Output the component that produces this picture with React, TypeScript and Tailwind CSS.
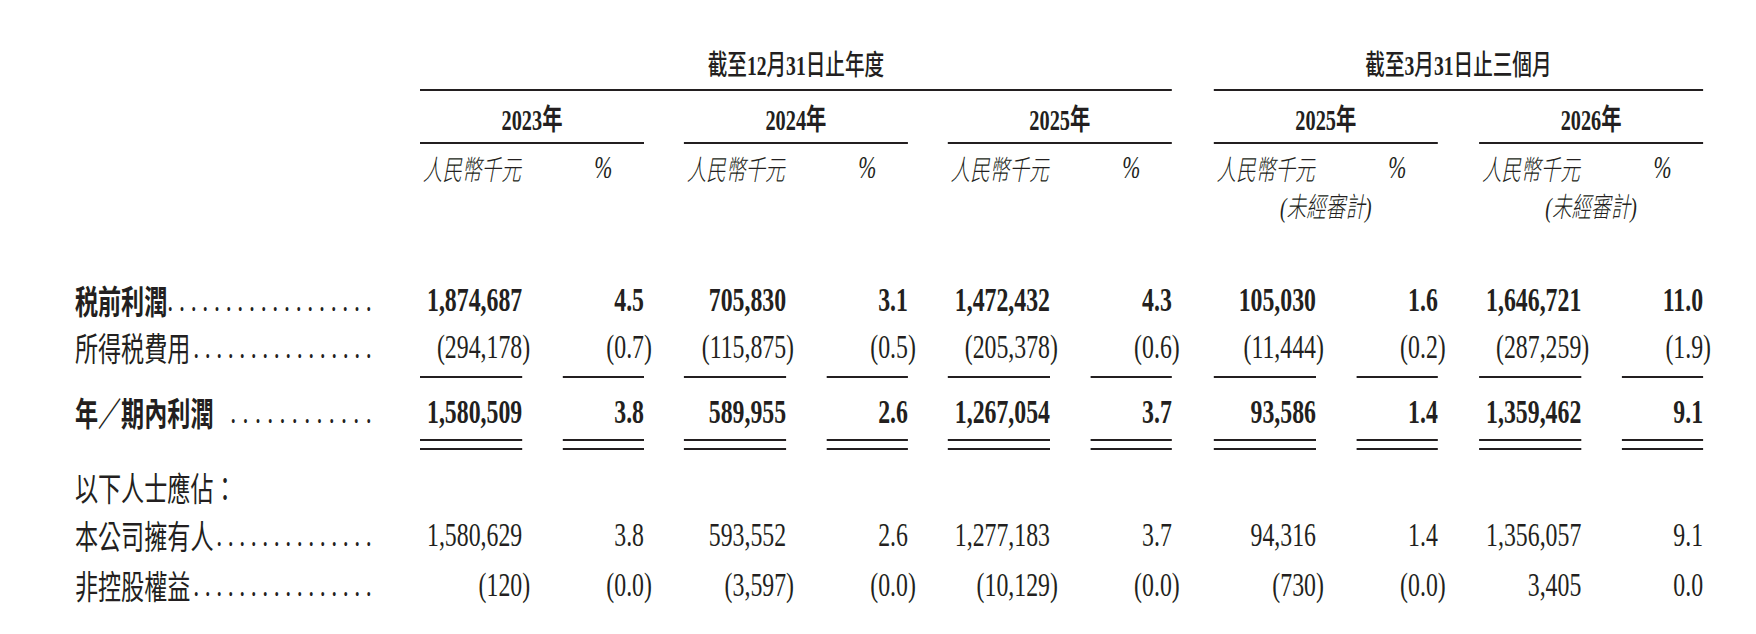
const ink = "text-[#231f20]";
const serif = "font-['Liberation_Serif','Noto_Sans_CJK_TC',serif]";
const sans = "font-['Noto_Sans_CJK_TC','Noto_Sans',sans-serif]";

// left margin of each of the five column groups (unscaled px)
const groupGaps = ["", "ml-[57px]", "ml-[57px]", "ml-[60px]", "ml-[59px]"];

type Pair = [string, string];

const rows: { label: string; bold?: boolean; dots?: number; lead?: string; vals?: Pair[] }[] = [
  {
    label: "税前利潤",
    bold: true,
    dots: 18,
    vals: [
      ["1,874,687", "4.5"],
      ["705,830", "3.1"],
      ["1,472,432", "4.3"],
      ["105,030", "1.6"],
      ["1,646,721", "11.0"],
    ],
  },
  {
    label: "所得税費用",
    dots: 16,
    lead: "pl-[4px]",
    vals: [
      ["(294,178)", "(0.7)"],
      ["(115,875)", "(0.5)"],
      ["(205,378)", "(0.6)"],
      ["(11,444)", "(0.2)"],
      ["(287,259)", "(1.9)"],
    ],
  },
  {
    label: "年／期內利潤",
    bold: true,
    dots: 12,
    lead: "pl-[24px]",
    vals: [
      ["1,580,509", "3.8"],
      ["589,955", "2.6"],
      ["1,267,054", "3.7"],
      ["93,586", "1.4"],
      ["1,359,462", "9.1"],
    ],
  },
  { label: "以下人士應佔：" },
  {
    label: "本公司擁有人",
    dots: 14,
    lead: "pl-[4px]",
    vals: [
      ["1,580,629", "3.8"],
      ["593,552", "2.6"],
      ["1,277,183", "3.7"],
      ["94,316", "1.4"],
      ["1,356,057", "9.1"],
    ],
  },
  {
    label: "非控股權益",
    dots: 16,
    lead: "pl-[4px]",
    vals: [
      ["(120)", "(0.0)"],
      ["(3,597)", "(0.0)"],
      ["(10,129)", "(0.0)"],
      ["(730)", "(0.0)"],
      ["3,405", "0.0"],
    ],
  },
];

// number, with a closing bracket that hangs past the column edge
function Num({ v, bold }: { v: string; bold?: boolean }) {
  const neg = v.endsWith(")");
  return (
    <div className={`flex justify-end whitespace-nowrap ${serif} text-[34px] leading-none ${bold ? "font-bold" : ""}`}>
      <span className="shrink-0">{neg ? v.slice(0, -1) : v}</span>
      {neg && <span className="w-0">)</span>}
    </div>
  );
}

function Label({ text, bold, dots = 0, lead }: { text: string; bold?: boolean; dots?: number; lead?: string }) {
  return (
    <div className="w-[600px] shrink-0 pl-[107px] pr-[69px] flex items-center">
      <span className={`shrink-0 whitespace-nowrap ${sans} text-[33px] leading-none ${bold ? "font-bold" : ""}`}>
        {text}
      </span>
      {dots > 0 && (
        <span className={`flex-1 flex justify-between ${lead ?? ""}`}>
          {Array.from({ length: dots }, (_, i) => (
            <span key={i} className="font-['Liberation_Serif',serif] text-[34px] leading-none">
              .
            </span>
          ))}
        </span>
      )}
    </div>
  );
}

function Rules() {
  return (
    <div className="flex h-[2px]">
      <div className="w-[600px] shrink-0" />
      {groupGaps.map((g, i) => (
        <div key={i} className={`flex w-[320px] shrink-0 ${g}`}>
          <div className="w-[146px] bg-[#231f20]" />
          <div className="w-[116px] ml-[58px] bg-[#231f20]" />
        </div>
      ))}
    </div>
  );
}

export default function App() {
  return (
    <div className={`w-[1756px] h-[634px] overflow-hidden bg-white ${ink}`}>
      <div className="w-[2509px] origin-top-left scale-x-[0.7] pt-[44px]">
        {/* period headings */}
        <div className="flex h-[41px] mb-[4px] items-center">
          <div className="w-[600px] shrink-0" />
          <div className={`w-[1074px] text-center ${sans} font-medium text-[28px] leading-none`}>
            截至<span className={`${serif} font-bold`}>12</span>月<span className={`${serif} font-bold`}>31</span>日止年度
          </div>
          <div className={`w-[699px] ml-[60px] text-center ${sans} font-medium text-[28px] leading-none`}>
            截至<span className={`${serif} font-bold`}>3</span>月<span className={`${serif} font-bold`}>31</span>日止三個月
          </div>
        </div>
        <div className="flex h-[2px]">
          <div className="w-[600px] shrink-0" />
          <div className="w-[1074px] bg-[#231f20]" />
          <div className="w-[699px] ml-[60px] bg-[#231f20]" />
        </div>

        {/* years */}
        <div className="flex h-[51px] pt-[5px] items-center">
          <div className="w-[600px] shrink-0" />
          {["2023", "2024", "2025", "2025", "2026"].map((y, i) => (
            <div key={i} className={`w-[320px] shrink-0 text-center ${serif} font-bold text-[29px] leading-none ${groupGaps[i]}`}>
              {y}
              <span className={sans}>年</span>
            </div>
          ))}
        </div>
        <div className="flex h-[2px]">
          <div className="w-[600px] shrink-0" />
          {groupGaps.map((g, i) => (
            <div key={i} className={`w-[320px] shrink-0 bg-[#231f20] ${g}`} />
          ))}
        </div>

        {/* units */}
        <div className="flex h-[84px] pt-[4px]">
          <div className="w-[600px] shrink-0" />
          {groupGaps.map((g, i) => (
            <div key={i} className={`w-[320px] shrink-0 flex flex-col italic leading-[40px] ${g}`}>
              <div className="flex">
                <div className={`w-[146px] pl-[4px] ${sans} font-light text-[28px] whitespace-nowrap`}>人民幣千元</div>
                <div className="w-[116px] ml-[58px] text-center font-['Liberation_Serif',serif] text-[31px]">%</div>
              </div>
              {i >= 3 && (
                <div className={`text-center ${serif} font-light text-[28px] whitespace-nowrap`}>(未經審計)</div>
              )}
            </div>
          ))}
        </div>

        <div className="h-[47px]" />

        {rows.map((r, ri) => {
          const heights = ["h-[50px]", "h-[44px]", "h-[61px] pt-[7px]", "h-[48px]", "h-[48px]", "h-[52px]"];
          return (
            <div key={r.label}>
              <div className={`flex items-center ${heights[ri]}`}>
                <Label text={r.label} bold={r.bold} dots={r.dots} lead={r.lead} />
                {r.vals?.map(([a, p], i) => (
                  <div key={i} className={`flex w-[320px] shrink-0 ${groupGaps[i]}`}>
                    <div className="w-[146px]">
                      <Num v={a} bold={r.bold} />
                    </div>
                    <div className="w-[116px] ml-[58px]">
                      <Num v={p} bold={r.bold} />
                    </div>
                  </div>
                ))}
              </div>
              {ri === 1 && (
                <>
                  <div className="h-[7px]" />
                  <Rules />
                </>
              )}
              {ri === 2 && (
                <>
                  <Rules />
                  <div className="h-[7px]" />
                  <Rules />
                  <div className="h-[13px]" />
                </>
              )}
            </div>
          );
        })}
      </div>
    </div>
  );
}
